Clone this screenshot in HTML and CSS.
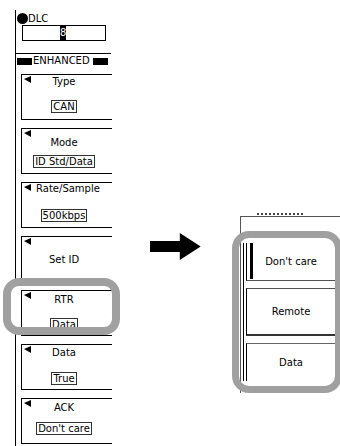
FILE: index.html
```html
<!DOCTYPE html>
<html lang="en">
<head>
<meta charset="UTF-8">
<meta name="viewport" content="width=device-width, initial-scale=1.0">
<title>Trigger Menu</title>
<link rel="stylesheet" href="styles.css">
</head>
<body>

<div class="page">

    <div class="menuCol">
        <div class="dlc">
            <div class="dlcHead"><span class="dot"></span>DLC</div>
            <div class="dlcBox"><span class="cursor">8</span></div>
        </div>

        <div class="enh"><span class="blk"></span>ENHANCED<span class="blk"></span></div>

        <div class="soft type">
            <span class="arrow"></span>
            <div class="title">Type</div>
            <div class="val">CAN</div>
        </div>
        <div class="soft mode">
            <span class="arrow"></span>
            <div class="title">Mode</div>
            <div class="val">ID Std/Data</div>
        </div>
        <div class="soft rate">
            <span class="arrow"></span>
            <div class="title">Rate/Sample</div>
            <div class="val">500kbps</div>
        </div>
        <div class="soft setid">
            <span class="arrow"></span>
            <div class="title">Set ID</div>
        </div>
        <div class="soft rtr">
            <span class="arrow"></span>
            <div class="title">RTR</div>
            <div class="val">Data</div>
            <span class="ring"></span>
        </div>
        <div class="soft data">
            <span class="arrow"></span>
            <div class="title">Data</div>
            <div class="val">True</div>
        </div>
        <div class="soft ack">
            <span class="arrow"></span>
            <div class="title">ACK</div>
            <div class="val">Don't care</div>
        </div>
    </div>

    <svg class="pointer" width="51" height="27" viewBox="0 0 51 27">
        <polygon points="0,8 30,8 30,0 51,13.5 30,27 30,19 0,19" fill="#000"/>
    </svg>

    <div class="popupCol">
        <div class="cut"></div>
        <div class="frame">
            <div class="ringBox">
                <div class="opts">
                    <div class="opt on">Don't care</div>
                    <div class="opt mid">Remote</div>
                    <div class="opt last">Data</div>
                </div>
            </div>
        </div>
    </div>

</div>

</body>
</html>
```

FILE: styles.css
```css
body {
    margin: 0;
    width: 340px;
    height: 446px;
    overflow: hidden;
    background: #fff;
    color: #000;
    font-family: "DejaVu Sans", sans-serif;
    font-size: 10px;
}

.page {
    display: flex;
    align-items: flex-start;
}

/* left soft-key column */
.menuCol {
    margin: 10px 0 0 15px;
    width: 97px;
    min-height: 436px;
    border-left: 1px solid #000;
}

.dlc {
    width: 94px;
    padding: 3px 0 12px 1px;
    border-bottom: 1px solid #000;
}

.dlcHead {
    display: flex;
    align-items: center;
    height: 11px;
    line-height: 11px;
}

.dot {
    width: 11px;
    height: 11px;
    border-radius: 50%;
    background: #000;
}

.dlcBox {
    margin: 1px 0 0 5px;
    width: 84px;
    height: 16px;
    box-sizing: border-box;
    border: 1px solid #000;
    padding-left: 37px;
}

.cursor {
    display: block;
    width: 6px;
    height: 14px;
    background: #000;
    color: #fff;
    line-height: 14px;
    text-align: center;
}

.enh {
    display: flex;
    align-items: center;
    gap: 1px;
    margin: 1px 0 0 1px;
    height: 12px;
    line-height: 12px;
}

.enh .blk {
    width: 15px;
    height: 7px;
    background: #000;
}

.enh .blk:last-child {
    margin-left: 2px;
}

.soft {
    position: relative;
    display: grid;
    justify-items: center;
    align-content: start;
    margin: 8px 0 0 5px;
    width: 91px;
    height: 46px;
    box-sizing: border-box;
    padding-right: 6px;
    border: 1px solid #000;
    border-right: none;
}

.soft.type {
    margin-top: 7px;
}

.arrow {
    grid-area: 1 / 1;
    justify-self: start;
    margin: 1px 0 0 2px;
    width: 0;
    height: 0;
    border-right: 7px solid #000;
    border-top: 3px solid transparent;
    border-bottom: 4px solid transparent;
}

.title {
    grid-area: 1 / 1;
    line-height: 12px;
}

.val {
    border: 1px solid #333;
    padding: 0 1px;
    line-height: 11px;
}

.type .title { margin-top: 1px; }
.type .val { margin-top: 12px; }
.mode .title { margin-top: 8px; }
.mode .val { margin-top: 6px; }
.rate .title { margin-top: 0; padding-left: 8px; }
.rate .val { margin-top: 14px; }
.setid .title { margin-top: 17px; }
.rtr .title { margin-top: 3px; }
.rtr .val { margin-top: 12px; }
.data .title { margin-top: 2px; }
.data .val { margin-top: 13px; }
.ack .title { margin-top: 3px; }
.ack .val { margin-top: 8px; }

/* grey highlight round the RTR key */
.ring {
    position: absolute;
    left: -19px;
    top: -13px;
    width: 117px;
    height: 57px;
    box-sizing: border-box;
    border: 8px solid #a0a0a0;
    border-radius: 16px;
    background: linear-gradient(to right, #fff 9px, transparent 9px);
}

.pointer {
    margin: 233px 0 0 38px;
}

/* popup on the right */
.popupCol {
    margin: 212px 0 0 39px;
    width: 100px;
}

/* bottom of a title that is cut off above the frame */
.cut {
    width: 46px;
    height: 1px;
    margin: 0 0 1px 17px;
    border-bottom: 2px dotted #444;
}

.frame {
    padding-top: 14px;
    border-top: 1px solid #555;
    border-left: 1px solid #555;
}

.ringBox {
    margin-left: -9px;
    width: 110px;
    height: 162px;
    box-sizing: border-box;
    padding: 5px 0 0 4px;
    border: 7px solid #a0a0a0;
    border-radius: 17px;
}

.opts {
    height: 138px;
    padding-left: 2px;
    border-left: 1px solid #000;
}

.opt {
    display: flex;
    align-items: center;
    justify-content: center;
    border-left: 1px solid #000;
}

.opt.on {
    height: 37px;
    border-bottom: 1px solid #555;
    background: linear-gradient(to right, transparent 3px, #000 3px, #000 6px, transparent 6px) no-repeat;
    background-size: 100% 36px;
}

.opt.mid {
    margin-top: 7px;
    height: 45px;
    border-top: 1px solid #555;
    border-bottom: 2px solid #333;
}

.opt.last {
    margin-top: 7px;
    height: 37px;
    border-top: 1px solid #666;
}
```
